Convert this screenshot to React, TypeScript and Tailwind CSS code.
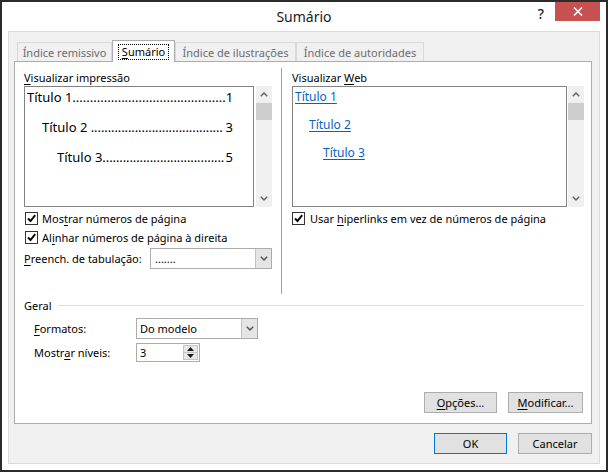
import React from 'react';

function Chevron({ dir, color = '#606060' }: { dir: 'up' | 'down'; color?: string }) {
  return (
    <svg width="8" height="5" viewBox="0 0 8 5">
      <path
        d={dir === 'up' ? 'M0.8 4.2 L4 1 L7.2 4.2' : 'M0.8 0.8 L4 4 L7.2 0.8'}
        fill="none"
        stroke={color}
        strokeWidth="1.4"
      />
    </svg>
  );
}

function Triangle({ dir }: { dir: 'up' | 'down' }) {
  return (
    <svg width="7" height="4" viewBox="0 0 7 4">
      <path d={dir === 'up' ? 'M0 4 L3.5 0 L7 4 Z' : 'M0 0 L3.5 4 L7 0 Z'} fill="#1a1a1a" />
    </svg>
  );
}

function Check({ label, indent = true }: { label: React.ReactNode; indent?: boolean }) {
  return (
    <div className="flex h-[18px] items-center">
      <span
        className={`flex h-[13px] w-[13px] items-center justify-center border border-[#333] bg-white ${
          indent ? 'ml-px' : ''
        }`}
      >
        <svg width="11" height="11" viewBox="0 0 11 11">
          <path d="M2 5.5 L4.5 8 L9.2 2.2" fill="none" stroke="#000" strokeWidth="1.9" />
        </svg>
      </span>
      <span className={indent ? 'ml-[4px]' : 'ml-[5px]'}>{label}</span>
    </div>
  );
}

function Scrollbar() {
  return (
    <div className="flex w-[16px] flex-col bg-[#f0f0f0]">
      <div className="flex h-[17px] items-center justify-center">
        <Chevron dir="up" />
      </div>
      <div className="h-[17px] bg-[#cdcdcd]" />
      <div className="flex-1" />
      <div className="flex h-[17px] items-center justify-center">
        <Chevron dir="down" />
      </div>
    </div>
  );
}

function Dropdown({ value, pad }: { value: string; pad: string }) {
  return (
    <div className="flex h-[21px] w-[122px] border border-[#acacac] bg-white">
      <div className={`flex flex-1 items-center ${pad}`}>{value}</div>
      <div className="flex w-[16px] items-center justify-center border-l border-[#c4c4c4] bg-[#e5e5e5]">
        <Chevron dir="down" color="#505050" />
      </div>
    </div>
  );
}

function Button({ children, w, primary }: { children: React.ReactNode; w: string; primary?: boolean }) {
  return (
    <div
      className={`flex h-[21px] items-center justify-center border bg-[#e1e1e1] ${w} ${
        primary ? 'border-[#0078d7]' : 'border-[#adadad]'
      }`}
    >
      {children}
    </div>
  );
}

// dot leaders are fixed strings so nothing gets clipped
const printRows = [
  { title: 'Título 1', dots: 44, page: '1', pad: 'pl-[2px]', track: '' },
  { title: 'Título 2 ', dots: 39, page: '3', pad: 'pl-[17px]', track: 'tracking-[-0.1px]' },
  { title: 'Título 3', dots: 36, page: '5', pad: 'pl-[32px]', track: 'tracking-[-0.1px]' },
];

const webRows = [
  { title: 'Título 1', pad: 'pl-[2px]' },
  { title: 'Título 2', pad: 'pl-[16px]' },
  { title: 'Título 3', pad: 'pl-[30px]' },
];

const tabs = [
  { name: 'Índice remissivo', w: 'w-[95px]' },
  { name: 'Sumário', w: 'w-[63px]', active: true },
  { name: 'Índice de ilustrações', w: 'w-[121px]' },
  { name: 'Índice de autoridades', w: 'w-[128px]' },
];

export default function App() {
  return (
    <div className="flex h-[472px] w-[608px] flex-col overflow-hidden border-2 border-[#2b2b2b] bg-white font-['Noto_Sans',sans-serif] text-[11px] leading-[15px] text-black">
      {/* title bar */}
      <div className="grid h-[29px] grid-cols-[1fr_auto_1fr]">
        <div />
        <div className="flex items-center text-[14px] text-[#1a1a1a]">Sumário</div>
        <div className="flex items-start justify-end pr-[6px]">
          <span className="mr-[11px] mt-[3px] text-[14px] font-medium leading-[18px] text-[#1a1a1a]">?</span>
          <div className="flex h-[19px] w-[45px] items-center justify-center bg-[#c75050]">
            <svg width="10" height="9" viewBox="0 0 10 9">
              <path d="M1 0.5 L9 8.5 M9 0.5 L1 8.5" stroke="#fff" strokeWidth="1.6" />
            </svg>
          </div>
        </div>
      </div>

      {/* client area */}
      <div className="mx-[6px] flex h-[433px] flex-col border border-[#dadada] bg-[#f0f0f0] pb-[9px] pl-[5px] pr-[7px] pt-[8px]">
        <div className="ml-[3px] flex h-[21px] items-end">
          {tabs.map((t) =>
            t.active ? (
              <div
                key={t.name}
                className={`relative z-10 -mb-px flex h-[22px] items-center justify-center border border-b-0 border-[#acacac] bg-white ${t.w}`}
              >
                <span className="border border-dotted border-black px-[3px] leading-[14px]">
                  <span className="underline underline-offset-2">S</span>umário
                </span>
              </div>
            ) : (
              <div
                key={t.name}
                className={`flex h-[19px] items-center justify-center border border-b-0 border-[#d9d9d9] bg-[#f0f0f0] text-[#6d6d6d] ${t.w}`}
              >
                {t.name}
              </div>
            )
          )}
        </div>

        {/* tab panel */}
        <div className="flex flex-1 flex-col border border-[#acacac] bg-white pb-[10px] pl-[9px] pr-[7px] pt-[6px]">
          <div className="flex h-[226px]">
            {/* print preview */}
            <div className="flex w-[248px] flex-col pt-[2px]">
              <div className="h-[15px]">
                <span className="underline underline-offset-2">V</span>isualizar impressão
              </div>
              <div className="mt-[1px] flex h-[121px] gap-[2px]">
                <div className="flex w-[230px] flex-col gap-[12px] border border-[#828282] pr-[20px] pt-[1px] text-[13px]">
                  {printRows.map((r) => (
                    <div key={r.title} className={`flex h-[18px] items-center whitespace-pre ${r.pad}`}>
                      <span>{r.title}</span>
                      <span className={r.track}>{'.'.repeat(r.dots)}</span>
                      <span className="ml-auto">{r.page}</span>
                    </div>
                  ))}
                </div>
                <Scrollbar />
              </div>
              <div className="mt-[2px] flex flex-col gap-[1px]">
                <Check
                  label={
                    <>
                      Mos<span className="underline underline-offset-2">t</span>rar números de página
                    </>
                  }
                />
                <Check
                  label={
                    <>
                      Al<span className="underline underline-offset-2">i</span>nhar números de página à direita
                    </>
                  }
                />
              </div>
              <div className="mt-[2px] flex h-[21px] items-center">
                <span className="w-[126px]">
                  <span className="underline underline-offset-2">P</span>reench. de tabulação:
                </span>
                <Dropdown value="......." pad="pl-[4px]" />
              </div>
            </div>

            <div className="ml-[9px] w-px bg-[#a0a0a0]" />

            {/* web preview */}
            <div className="ml-[10px] flex flex-1 flex-col pt-[2px]">
              <div className="h-[15px]">
                Visualizar <span className="underline underline-offset-2">W</span>eb
              </div>
              <div className="mt-[1px] flex h-[121px] gap-[1px]">
                <div className="flex flex-1 flex-col gap-[10px] border border-[#828282] text-[12px] text-[#0563c1]">
                  {webRows.map((r) => (
                    <div key={r.title} className={`flex h-[18px] items-center ${r.pad}`}>
                      <span className="underline underline-offset-2">{r.title}</span>
                    </div>
                  ))}
                </div>
                <Scrollbar />
              </div>
              <div className="mt-[2px]">
                <Check
                  indent={false}
                  label={
                    <>
                      Usar <span className="underline underline-offset-2">h</span>iperlinks em vez de números de página
                    </>
                  }
                />
              </div>
            </div>
          </div>

          {/* Geral */}
          <div className="mt-[4px] flex h-[15px] items-center">
            <span>Geral</span>
            <div className="ml-[6px] h-px flex-1 bg-[#dcdcdc]" />
          </div>
          <div className="mt-[5px] flex h-[21px] items-center pl-[10px]">
            <span className="w-[102px]">
              <span className="underline underline-offset-2">F</span>ormatos:
            </span>
            <Dropdown value="Do modelo" pad="pl-[3px]" />
          </div>
          <div className="mt-[4px] flex h-[19px] items-center pl-[10px]">
            <span className="w-[102px]">
              Mostr<span className="underline underline-offset-2">a</span>r níveis:
            </span>
            <div className="flex h-[19px] w-[64px] border border-[#acacac] bg-white">
              <div className="flex flex-1 items-center pl-[3px]">3</div>
              <div className="my-px mr-px flex w-[15px] flex-col border border-[#c4c4c4] bg-[#e8e8e8]">
                <div className="flex flex-1 items-center justify-center border-b border-[#c4c4c4]">
                  <Triangle dir="up" />
                </div>
                <div className="flex flex-1 items-center justify-center">
                  <Triangle dir="down" />
                </div>
              </div>
            </div>
          </div>

          <div className="mt-auto flex h-[21px] justify-end gap-[11px] pr-px">
            <Button w="w-[73px]">
              <span>
                <span className="underline underline-offset-2">O</span>pções...
              </span>
            </Button>
            <Button w="w-[75px]">
              <span>
                <span className="underline underline-offset-2">M</span>odificar...
              </span>
            </Button>
          </div>
        </div>

        <div className="mt-[9px] flex h-[21px] justify-end gap-[11px]">
          <Button w="w-[73px]" primary>
            OK
          </Button>
          <Button w="w-[74px]">Cancelar</Button>
        </div>
      </div>
    </div>
  );
}
